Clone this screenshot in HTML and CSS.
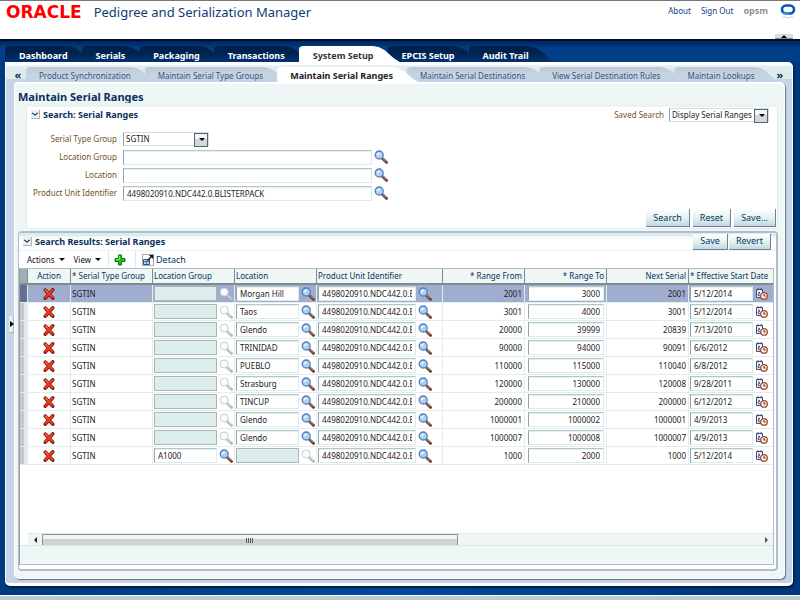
FILE: index.html
```html
<!DOCTYPE html>
<html lang="en">
<head>
<meta charset="utf-8">
<title>Pedigree and Serialization Manager</title>
<link rel="stylesheet" href="styles.css">
</head>
<body>
<svg class="defs" aria-hidden="true">
  <symbol id="i-find" viewBox="0 0 14 14">
    <path d="M8 8l4.6 4.4" stroke="#6b4234" stroke-width="2.8" stroke-linecap="round"/>
    <path d="M8.6 8l3.6 3.4" stroke="#c79a86" stroke-width="1"/>
    <circle cx="5.2" cy="5" r="4" fill="#a9d2f6" stroke="#5480b8" stroke-width="1.3"/>
    <path d="M2.8 5.2A2.6 2.6 0 0 1 6 2.5L5 5z" fill="#e9f6ff"/>
  </symbol>
  <symbol id="i-find-off" viewBox="0 0 14 14">
    <path d="M8 8l4.6 4.4" stroke="#b4b8ba" stroke-width="2.8" stroke-linecap="round"/>
    <path d="M8.6 8l3.6 3.4" stroke="#eef0f0" stroke-width="1"/>
    <circle cx="5.2" cy="5" r="4" fill="#fbfdfd" stroke="#c8cdcf" stroke-width="1"/>
  </symbol>
  <symbol id="i-del" viewBox="0 0 12 12">
    <path d="M2.3 2.1l7.4 8M9.7 1.9l-7.4 8.2" stroke="#6d1408" stroke-width="3.6" stroke-linecap="round"/>
    <path d="M2.3 2.1l7.2 7.6M9.5 2l-7 7.8" stroke="#ee3a1c" stroke-width="2.1" stroke-linecap="round"/>
    <path d="M2.4 1.8l2.4 2.6" stroke="#ff9a7c" stroke-width="1"/>
  </symbol>
  <symbol id="i-date" viewBox="0 0 14 12">
    <path d="M1.5 1.5h6v8h-6z" fill="#fff" stroke="#3d4f78"/>
    <path d="M3 0v2.400M6.200 0v2.400M3 4.200h1.600v1.500H3.200v2h2" fill="none" stroke="#3d4f78"/>
    <circle cx="9" cy="7.900" r="3.300" fill="#fff3e2" stroke="#a04632" stroke-width="1.300"/>
    <path d="M9 6v2.100h1.600" fill="none" stroke="#333"/>
  </symbol>
  <symbol id="i-add" viewBox="0 0 12 12">
    <path d="M4.5 1h3v3.5H11v3H7.500V11h-3V7.500H1v-3h3.500z" fill="#1fc01f" stroke="#087a0d"/>
    <path d="M5.500 2v3.500H2" fill="none" stroke="#8df07a"/>
  </symbol>
  <symbol id="i-detach" viewBox="0 0 12 12">
    <path d="M.5.5h11v11H.5z" fill="#fff" stroke="#555" stroke-dasharray="1 1"/>
    <path d="M1.500 5.500h6v5h-6z" fill="#b5d8f6" stroke="#29568f"/>
    <path d="M1.500 7.500h6M4.500 7.500v3" stroke="#29568f" stroke-width=".8"/>
    <path d="M5.500 6.500l4-4" stroke="#111" stroke-width="1.300"/>
    <path d="M7 1h4.300v4.300z" fill="#111"/>
  </symbol>
  <symbol id="i-chev" viewBox="0 0 7 7"><path d="M1 2.500l2.500 2 2.500-2" fill="none" stroke="#1b2a44"/></symbol>
</svg>

<header class="top">
  <span class="logo">ORACLE</span>
  <h1 class="product">Pedigree and Serialization Manager</h1>
  <nav class="links"><a href="#">About</a><a href="#">Sign Out</a><span class="user">opsm</span></nav>
  <svg class="ring" viewBox="0 0 16 15"><rect x="2" y="1.500" width="12" height="8" rx="4" fill="#fff" stroke="#0b55b4" stroke-width="2.600"/><path d="M3 8.500q2 1.500 6 1.200" stroke="#2fa4dc" stroke-width="1.500" fill="none"/><path d="M3 12.500q5 2.500 10 0" stroke="#bcd8ee" fill="none"/></svg>
  <button class="fold" aria-label="Collapse header"></button>
</header>

<nav class="tabs">
  <a href="#">Dashboard</a><a href="#">Serials</a><a href="#">Packaging</a><a href="#">Transactions</a><a href="#" class="on">System Setup</a><a href="#">EPCIS Setup</a><a href="#">Audit Trail</a>
</nav>

<main class="shell">
  <nav class="subtabs">
    <button class="more">«</button>
    <a href="#">Product Synchronization</a><a href="#">Maintain Serial Type Groups</a><a href="#" class="on">Maintain Serial Ranges</a><a href="#">Maintain Serial Destinations</a><a href="#">View Serial Destination Rules</a><a href="#">Maintain Lookups</a>
    <button class="more last">»</button>
  </nav>
  <button class="splitter" aria-label="Expand pane"></button>
  <div class="page">
    <h2>Maintain Serial Ranges</h2>

    <section class="search">
      <div class="search-head">
        <h3><button class="disc" aria-label="Collapse"><svg><use href="#i-chev"/></svg></button>Search: Serial Ranges</h3>
        <label for="saved">Saved Search</label>
        <span class="pick saved"><select id="saved"><option>Display Serial Ranges</option></select></span>
      </div>
      <div class="form">
        <label for="stg">Serial Type Group</label><span class="pick stg"><select id="stg"><option>SGTIN</option></select></span><span></span>
        <label for="lg">Location Group</label><input id="lg"><button class="ic" aria-label="Search location group"><svg><use href="#i-find"/></svg></button>
        <label for="loc">Location</label><input id="loc"><button class="ic" aria-label="Search location"><svg><use href="#i-find"/></svg></button>
        <label for="pui">Product Unit Identifier</label><input id="pui" value="4498020910.NDC442.0.BLISTERPACK"><button class="ic" aria-label="Search product"><svg><use href="#i-find"/></svg></button>
      </div>
      <div class="actions"><button class="btn">Search</button><button class="btn">Reset</button><button class="btn">Save...</button></div>
    </section>

    <section class="results">
      <div class="results-head">
        <h3><button class="disc" aria-label="Collapse"><svg><use href="#i-chev"/></svg></button>Search Results: Serial Ranges</h3>
        <button class="btn small">Save</button><button class="btn small">Revert</button>
      </div>
      <div class="toolbar">
        <button class="menu">Actions</button><button class="menu">View</button>
        <button class="tool add" aria-label="Add"><svg><use href="#i-add"/></svg></button>
        <button class="tool"><svg><use href="#i-detach"/></svg>Detach</button>
      </div>
      <div class="grid">
        <table>
          <colgroup><col class="c-sel"><col class="c-act"><col class="c-std"><col class="c-std"><col class="c-std"><col class="c-pui"><col class="c-std"><col class="c-std"><col class="c-std"><col></colgroup>
          <thead><tr><th class="sel"></th><th class="mid">Action</th><th>* Serial Type Group</th><th>Location Group</th><th>Location</th><th>Product Unit Identifier</th><th class="num">* Range From</th><th class="num">* Range To</th><th class="num">Next Serial</th><th>* Effective Start Date</th></tr></thead>
          <tbody>
            <tr class="cur"><td class="sel"></td><td class="mid"><button class="ic del" aria-label="Delete"><svg><use href="#i-del"/></svg></button></td><td>SGTIN</td>
              <td><div class="f"><input aria-label="Location Group" disabled><button class="ic" aria-label="Find" disabled><svg><use href="#i-find-off"/></svg></button></div></td>
              <td><div class="f"><input aria-label="Location" value="Morgan Hill"><button class="ic" aria-label="Find"><svg><use href="#i-find"/></svg></button></div></td>
              <td><div class="f wide"><input aria-label="Product Unit Identifier" value="4498020910.NDC442.0.BLISTERPACK"><button class="ic" aria-label="Find"><svg><use href="#i-find"/></svg></button></div></td>
              <td class="num">2001</td><td class="to"><input aria-label="Range To" value="3000"></td><td class="num">2001</td>
              <td><div class="f date"><input aria-label="Effective Start Date" value="5/12/2014"><button class="ic" aria-label="Pick date"><svg><use href="#i-date"/></svg></button></div></td></tr>
            <tr><td class="sel"></td><td class="mid"><button class="ic del" aria-label="Delete"><svg><use href="#i-del"/></svg></button></td><td>SGTIN</td>
              <td><div class="f"><input aria-label="Location Group" disabled><button class="ic" aria-label="Find" disabled><svg><use href="#i-find-off"/></svg></button></div></td>
              <td><div class="f"><input aria-label="Location" value="Taos"><button class="ic" aria-label="Find"><svg><use href="#i-find"/></svg></button></div></td>
              <td><div class="f wide"><input aria-label="Product Unit Identifier" value="4498020910.NDC442.0.BLISTERPACK"><button class="ic" aria-label="Find"><svg><use href="#i-find"/></svg></button></div></td>
              <td class="num">3001</td><td class="to"><input aria-label="Range To" value="4000"></td><td class="num">3001</td>
              <td><div class="f date"><input aria-label="Effective Start Date" value="5/12/2014"><button class="ic" aria-label="Pick date"><svg><use href="#i-date"/></svg></button></div></td></tr>
            <tr><td class="sel"></td><td class="mid"><button class="ic del" aria-label="Delete"><svg><use href="#i-del"/></svg></button></td><td>SGTIN</td>
              <td><div class="f"><input aria-label="Location Group" disabled><button class="ic" aria-label="Find" disabled><svg><use href="#i-find-off"/></svg></button></div></td>
              <td><div class="f"><input aria-label="Location" value="Glendo"><button class="ic" aria-label="Find"><svg><use href="#i-find"/></svg></button></div></td>
              <td><div class="f wide"><input aria-label="Product Unit Identifier" value="4498020910.NDC442.0.BLISTERPACK"><button class="ic" aria-label="Find"><svg><use href="#i-find"/></svg></button></div></td>
              <td class="num">20000</td><td class="to"><input aria-label="Range To" value="39999"></td><td class="num">20839</td>
              <td><div class="f date"><input aria-label="Effective Start Date" value="7/13/2010"><button class="ic" aria-label="Pick date"><svg><use href="#i-date"/></svg></button></div></td></tr>
            <tr><td class="sel"></td><td class="mid"><button class="ic del" aria-label="Delete"><svg><use href="#i-del"/></svg></button></td><td>SGTIN</td>
              <td><div class="f"><input aria-label="Location Group" disabled><button class="ic" aria-label="Find" disabled><svg><use href="#i-find-off"/></svg></button></div></td>
              <td><div class="f"><input aria-label="Location" value="TRINIDAD"><button class="ic" aria-label="Find"><svg><use href="#i-find"/></svg></button></div></td>
              <td><div class="f wide"><input aria-label="Product Unit Identifier" value="4498020910.NDC442.0.BLISTERPACK"><button class="ic" aria-label="Find"><svg><use href="#i-find"/></svg></button></div></td>
              <td class="num">90000</td><td class="to"><input aria-label="Range To" value="94000"></td><td class="num">90091</td>
              <td><div class="f date"><input aria-label="Effective Start Date" value="6/6/2012"><button class="ic" aria-label="Pick date"><svg><use href="#i-date"/></svg></button></div></td></tr>
            <tr><td class="sel"></td><td class="mid"><button class="ic del" aria-label="Delete"><svg><use href="#i-del"/></svg></button></td><td>SGTIN</td>
              <td><div class="f"><input aria-label="Location Group" disabled><button class="ic" aria-label="Find" disabled><svg><use href="#i-find-off"/></svg></button></div></td>
              <td><div class="f"><input aria-label="Location" value="PUEBLO"><button class="ic" aria-label="Find"><svg><use href="#i-find"/></svg></button></div></td>
              <td><div class="f wide"><input aria-label="Product Unit Identifier" value="4498020910.NDC442.0.BLISTERPACK"><button class="ic" aria-label="Find"><svg><use href="#i-find"/></svg></button></div></td>
              <td class="num">110000</td><td class="to"><input aria-label="Range To" value="115000"></td><td class="num">110040</td>
              <td><div class="f date"><input aria-label="Effective Start Date" value="6/8/2012"><button class="ic" aria-label="Pick date"><svg><use href="#i-date"/></svg></button></div></td></tr>
            <tr><td class="sel"></td><td class="mid"><button class="ic del" aria-label="Delete"><svg><use href="#i-del"/></svg></button></td><td>SGTIN</td>
              <td><div class="f"><input aria-label="Location Group" disabled><button class="ic" aria-label="Find" disabled><svg><use href="#i-find-off"/></svg></button></div></td>
              <td><div class="f"><input aria-label="Location" value="Strasburg"><button class="ic" aria-label="Find"><svg><use href="#i-find"/></svg></button></div></td>
              <td><div class="f wide"><input aria-label="Product Unit Identifier" value="4498020910.NDC442.0.BLISTERPACK"><button class="ic" aria-label="Find"><svg><use href="#i-find"/></svg></button></div></td>
              <td class="num">120000</td><td class="to"><input aria-label="Range To" value="130000"></td><td class="num">120008</td>
              <td><div class="f date"><input aria-label="Effective Start Date" value="9/28/2011"><button class="ic" aria-label="Pick date"><svg><use href="#i-date"/></svg></button></div></td></tr>
            <tr><td class="sel"></td><td class="mid"><button class="ic del" aria-label="Delete"><svg><use href="#i-del"/></svg></button></td><td>SGTIN</td>
              <td><div class="f"><input aria-label="Location Group" disabled><button class="ic" aria-label="Find" disabled><svg><use href="#i-find-off"/></svg></button></div></td>
              <td><div class="f"><input aria-label="Location" value="TINCUP"><button class="ic" aria-label="Find"><svg><use href="#i-find"/></svg></button></div></td>
              <td><div class="f wide"><input aria-label="Product Unit Identifier" value="4498020910.NDC442.0.BLISTERPACK"><button class="ic" aria-label="Find"><svg><use href="#i-find"/></svg></button></div></td>
              <td class="num">200000</td><td class="to"><input aria-label="Range To" value="210000"></td><td class="num">200000</td>
              <td><div class="f date"><input aria-label="Effective Start Date" value="6/12/2012"><button class="ic" aria-label="Pick date"><svg><use href="#i-date"/></svg></button></div></td></tr>
            <tr><td class="sel"></td><td class="mid"><button class="ic del" aria-label="Delete"><svg><use href="#i-del"/></svg></button></td><td>SGTIN</td>
              <td><div class="f"><input aria-label="Location Group" disabled><button class="ic" aria-label="Find" disabled><svg><use href="#i-find-off"/></svg></button></div></td>
              <td><div class="f"><input aria-label="Location" value="Glendo"><button class="ic" aria-label="Find"><svg><use href="#i-find"/></svg></button></div></td>
              <td><div class="f wide"><input aria-label="Product Unit Identifier" value="4498020910.NDC442.0.BLISTERPACK"><button class="ic" aria-label="Find"><svg><use href="#i-find"/></svg></button></div></td>
              <td class="num">1000001</td><td class="to"><input aria-label="Range To" value="1000002"></td><td class="num">1000001</td>
              <td><div class="f date"><input aria-label="Effective Start Date" value="4/9/2013"><button class="ic" aria-label="Pick date"><svg><use href="#i-date"/></svg></button></div></td></tr>
            <tr><td class="sel"></td><td class="mid"><button class="ic del" aria-label="Delete"><svg><use href="#i-del"/></svg></button></td><td>SGTIN</td>
              <td><div class="f"><input aria-label="Location Group" disabled><button class="ic" aria-label="Find" disabled><svg><use href="#i-find-off"/></svg></button></div></td>
              <td><div class="f"><input aria-label="Location" value="Glendo"><button class="ic" aria-label="Find"><svg><use href="#i-find"/></svg></button></div></td>
              <td><div class="f wide"><input aria-label="Product Unit Identifier" value="4498020910.NDC442.0.BLISTERPACK"><button class="ic" aria-label="Find"><svg><use href="#i-find"/></svg></button></div></td>
              <td class="num">1000007</td><td class="to"><input aria-label="Range To" value="1000008"></td><td class="num">1000007</td>
              <td><div class="f date"><input aria-label="Effective Start Date" value="4/9/2013"><button class="ic" aria-label="Pick date"><svg><use href="#i-date"/></svg></button></div></td></tr>
            <tr><td class="sel"></td><td class="mid"><button class="ic del" aria-label="Delete"><svg><use href="#i-del"/></svg></button></td><td>SGTIN</td>
              <td><div class="f"><input aria-label="Location Group" value="A1000"><button class="ic" aria-label="Find"><svg><use href="#i-find"/></svg></button></div></td>
              <td><div class="f"><input aria-label="Location" disabled><button class="ic" aria-label="Find" disabled><svg><use href="#i-find-off"/></svg></button></div></td>
              <td><div class="f wide"><input aria-label="Product Unit Identifier" value="4498020910.NDC442.0.BLISTERPACK"><button class="ic" aria-label="Find"><svg><use href="#i-find"/></svg></button></div></td>
              <td class="num">1000</td><td class="to"><input aria-label="Range To" value="2000"></td><td class="num">1000</td>
              <td><div class="f date"><input aria-label="Effective Start Date" value="5/12/2014"><button class="ic" aria-label="Pick date"><svg><use href="#i-date"/></svg></button></div></td></tr>
          </tbody>
        </table>
        <div class="hbar"><button class="arrow left" aria-label="Scroll left"></button><div class="track"><div class="thumb"></div></div><button class="arrow right" aria-label="Scroll right"></button></div>
        <div class="status"></div>
      </div>
    </section>
  </div>
</main>
<footer class="foot"></footer>
</body>
</html>
```

FILE: styles.css
```css
* { box-sizing: border-box; }
body {
  margin: 0;
  min-height: 100vh;
  display: flex;
  flex-direction: column;
  background: linear-gradient(90deg, #003a80, #004a9c 50%, #00367c);
  color: #222;
  font: 8px/10px "Noto Sans", "DejaVu Sans Condensed", sans-serif;
}
a { color: inherit; text-decoration: none; }
button, input, select { font: inherit; color: inherit; margin: 0; padding: 0; border: 0; background: none; border-radius: 0; }
h1, h2, h3 { margin: 0; font-size: inherit; color: #0a2f5c; }
.defs { position: absolute; width: 0; height: 0; }

/* header */
.top {
  position: relative;
  display: flex;
  align-items: flex-start;
  height: 41px;
  padding: 0 4px 0 6px;
  background: #fff;
  border-top: 1px solid #777;
  border-bottom: 2px solid #02102c;
}
.logo { font: bold 17px/23px "DejaVu Sans", sans-serif; color: #f00; }
.product { margin-left: 12px; font-size: 13px; line-height: 22px; font-weight: normal; color: #0c3c78; }
.links { display: flex; gap: 10px; margin-left: auto; line-height: 20px; color: #0a3f86; }
.user { font-size: 9px; font-weight: bold; color: #8c9296; }
.ring { width: 16px; height: 15px; margin: 3px 0 0 12px; }
.fold { position: absolute; right: 7px; bottom: 0; width: 18px; height: 5px; background: #d6e0e6; border-bottom: 1px solid #889; }
.fold::after { content: ""; position: absolute; left: 6px; top: 1px; border: 3px solid transparent; border-top: 0; border-bottom: 3px solid #000; }

/* primary tabs */
.tabs { display: flex; height: 21px; padding: 5px 0 0 5px; background: linear-gradient(#00255c, #003f88 7px, #003f88); font-size: 9px; font-weight: bold; line-height: 20px; color: #fff; }
.tabs a { padding: 0 26px 0 14px; margin-right: -12px; background: linear-gradient(#001f4c, #002450 50%, #003474); white-space: nowrap; }
.tabs a, .subtabs a { clip-path: polygon(0 4px, 1px 1px, 4px 0, calc(100% - 27px) 0, calc(100% - 21px) 1px, calc(100% - 15px) 4px, calc(100% - 6px) 12px, 100% 100%, 0 100%); }
.tabs .on { position: relative; z-index: 1; background: #fff; color: #333; }

/* framed page */
.shell {
  position: relative;
  flex: 1;
  display: flex;
  flex-direction: column;
  margin: 0 7px 9px 5px;
  padding: 0 7px 4px 8px;
  border: solid #fff;
  border-width: 3px 1px 3px 1px;
  border-radius: 0 5px 5px 5px;
  background: #c7d4e7;
  box-shadow: 1px 2px 2px #001a40;
}
.subtabs { display: flex; height: 17px; margin: 0 -7px 0 -8px; padding: 2px 0 0 4px; background: linear-gradient(#e8f2f2 2px, #dcecec 2px, #dcecec 14px, #c7d4e7 14px); line-height: 18px; color: #3a5578; }
.subtabs a { padding: 0 26px 0 13px; margin-right: -12px; background: linear-gradient(#b9c9d4, #c7d4e2 50%, #c2d2e6); white-space: nowrap; }
.subtabs .on { position: relative; z-index: 1; background: #fff; color: #222; font-size: 9px; font-weight: bold; }
.more { width: 16px; flex: none; font-size: 11px; line-height: 15px; font-weight: bold; color: #0a2f5c; }
.more.last { margin-left: auto; margin-right: 4px; }
.splitter { position: absolute; left: 3px; top: 251px; width: 5px; height: 17px; background: #e6edf0; border: solid #a9b6c0; border-width: 0 1px 1px 0; }
.splitter::after { content: ""; position: absolute; left: 1px; top: 5px; border: 3px solid transparent; border-left: 4px solid #000; border-right: 0; }
.page {
  flex: 1;
  display: flex;
  flex-direction: column;
  padding: 6px 6px 7px 3px;
  background: #eef6f6;
  border: 1px solid #fff;
  border-top-width: 2px;
  border-radius: 3px 5px 5px 5px;
  box-shadow: 1px 1px 1px #66718c;
}
h2 { font-size: 11px; line-height: 13px; }

/* search panel */
.search { height: 126px; flex: none; margin-left: 8px; background: #fff; border: 1px solid #ddeeee; border-top: 4px solid #eaf4f4; border-radius: 3px; display: flex; flex-direction: column; }
h3 { display: flex; align-items: center; margin-right: auto; font-size: 9px; }
.disc { display: flex; width: 9px; height: 9px; margin-right: 3px; background: #e9eff2; border: solid #a9b6c0; border-width: 0 1px 1px 0; }
.disc svg { width: 8px; height: 8px; }
.search-head { display: flex; align-items: center; height: 15px; padding: 0 8px 0 4px; gap: 5px; color: #6e541c; }
.pick { position: relative; display: block; height: 14px; border: 1px solid #d3dede; border-left-color: #8fa3ac; background: #fff; color: #222; }
.pick select { appearance: none; width: 100%; height: 12px; padding-left: 2px; line-height: 12px; outline: 0; }
.pick::after { content: ""; position: absolute; right: 0; top: 0; width: 12px; height: 12px; border: 1px solid #59656c; pointer-events: none; background: linear-gradient(#f2f6f6 40%, #d0dada 40%); }
.pick::before { content: ""; position: absolute; z-index: 1; right: 3px; top: 5px; border: 3px solid transparent; border-top-color: #000; border-bottom: 0; pointer-events: none; }
.saved { width: 100px; }
.stg { width: 86px; }
.form { display: grid; grid-template-columns: 90px 249px 14px; grid-auto-rows: 18px; column-gap: 6px; align-items: center; margin-top: 8px; }
.form .ic { margin-left: -4px; }
.form label { text-align: right; color: #6e541c; white-space: nowrap; }
input { min-width: 0; height: 15px; padding: 0 3px; background: #fff; border: 1px solid #dceaea; border-top-color: #b8c6ca; border-left-color: #8fa3ac; color: #222; box-shadow: inset 0 1px #e4f1f1; }
.ic { display: flex; flex: none; }
.ic svg { width: 14px; height: 14px; }
.actions { display: flex; justify-content: flex-end; gap: 3px; margin: auto 1px 1px 0; }
.btn { height: 18px; padding: 0 7px; border: solid #6f8290; border-width: 0 1px 1px 0; background: linear-gradient(#fff, #e4f1f1 50%, #d8eaec 70%, #c3d3e6); font-size: 9px; color: #0a3560; }
.btn.small { height: 16px; margin-left: 1px; }

/* results panel */
.results { flex: 1; display: flex; flex-direction: column; margin: 2px 0 0 0; padding-bottom: 4px; background: #fff; border: 2px solid #b2bcd0; border-width: 2px 2px 2px 1px; border-radius: 4px; }
.results-head { display: flex; align-items: center; height: 18px; padding: 0 5px 0 4px; background: linear-gradient(#dcecec 3px, #eef6f6 3px, #fff 8px); border-bottom: 1px solid #eaf3f3; }
.toolbar { display: flex; align-items: center; height: 17px; padding-left: 8px; color: #111; }
.menu { display: flex; align-items: center; margin-right: 9px; }
.menu::after { content: ""; margin-left: 4px; border: 3px solid transparent; border-top-color: #111; border-bottom: 0; }
.tool { display: flex; align-items: center; height: 17px; gap: 2px; padding-left: 6px; border-left: 1px solid #dcecec; font-size: 9px; color: #0a3560; }
.tool.add { padding: 0 9px 0 5px; margin-left: -2px; }
.tool svg { width: 12px; height: 12px; }
.grid { flex: 1; display: flex; flex-direction: column; margin: 0 2px 0 0; border: 1px solid #b4bcbf; border-left-color: #9a9a9a; overflow: hidden; }
table { width: 100%; table-layout: fixed; border-collapse: separate; border-spacing: 0; }
.c-sel { width: 8px; }
.c-act { width: 43px; }
.c-std { width: 82px; }
.c-pui { width: 126px; }
th, td { height: 18px; padding: 0 1px; text-align: left; white-space: nowrap; overflow: hidden; border-right: 1px solid #e0eeee; border-bottom: 1px solid #e0eeee; }
th { height: 16px; font-weight: normal; color: #0a3560; background: #eef6f6; border-right-color: #7d8b92; border-bottom: 2px solid #7d8b92; }
th:last-child, td:last-child { border-right: 0; }
.mid { text-align: center; }
.num { text-align: right; padding-right: 2px; }
td.sel { background: linear-gradient(90deg, #c3c9ce 4px, #dcecec 4px); }
th.sel { background: #9eafb6; }
.cur td { background: #9fadce; }
.cur td.sel { background: #66708e; }
.del { margin: auto; width: 12px; }
.del svg { width: 12px; height: 12px; }
.f { display: flex; align-items: center; gap: 2px; }
.f input { width: 65px; }
.f.wide input { width: 98px; }
.f.date input { width: 63px; }
.f.date svg { height: 12px; }
input:disabled { background: #dcedec; border-color: #aeb4b4; box-shadow: none; }
.to { padding: 0 2px 0 3px; }
.to input { display: block; width: 100%; text-align: right; }
.hbar { display: flex; height: 12px; margin: auto 0 0 8px; background: #eef6f6; border-top: 1px solid #dcecec; }
.arrow { width: 14px; display: grid; place-items: center; }
.arrow::after { content: ""; border: 3px solid transparent; }
.left::after { border-right-color: #222; border-left: 0; }
.right::after { border-left-color: #555; border-right: 0; }
.track { flex: 1; }
.thumb { width: 58%; height: 12px; display: grid; place-items: center; border: 1px solid #8f9494; background: linear-gradient(#f0f4f4 45%, #cdd3d3 45%); }
.thumb::after { content: ""; width: 7px; height: 5px; background: repeating-linear-gradient(90deg, #555 0 1px, transparent 1px 2px); }
.status { height: 19px; background: #eef6f6; border-top: 1px solid #d8e8e8; }
.foot { height: 5px; background: #bccbd2; border-top: 1px solid #fff; }
```
